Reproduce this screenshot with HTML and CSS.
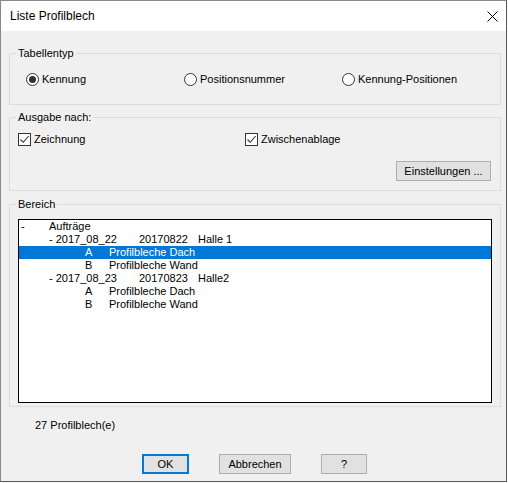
FILE: index.html
```html
<!DOCTYPE html>
<html lang="de">
<head>
<meta charset="utf-8">
<title>Liste Profilblech</title>
<link rel="stylesheet" href="styles.css">
</head>
<body>
<div class="window">
  <div class="titlebar">
    <span class="title">Liste Profilblech</span>
    <svg class="close" width="11" height="11" viewBox="0 0 11 11"><path d="M0.5 0.5 L10.5 10.5 M10.5 0.5 L0.5 10.5" stroke="#000" stroke-width="1" fill="none"/></svg>
  </div>
  <div class="content">
    <div class="group g1">
      <div class="group-title">Tabellentyp</div>
      <div class="radio-row">
        <label class="opt"><span class="radio checked"></span>Kennung</label>
        <label class="opt"><span class="radio"></span>Positionsnummer</label>
        <label class="opt"><span class="radio"></span>Kennung-Positionen</label>
      </div>
    </div>
    <div class="group g2">
      <div class="group-title">Ausgabe nach:</div>
      <div class="check-row">
        <label class="chk-opt"><span class="check"><svg width="11" height="11" viewBox="0 0 11 11"><path d="M1.5 5.5 L4.2 8.3 L9.7 2" stroke="#333" stroke-width="1.1" fill="none"/></svg></span>Zeichnung</label>
        <label class="chk-opt"><span class="check"><svg width="11" height="11" viewBox="0 0 11 11"><path d="M1.5 5.5 L4.2 8.3 L9.7 2" stroke="#333" stroke-width="1.1" fill="none"/></svg></span>Zwischenablage</label>
      </div>
      <div class="btn-row-right">
        <button class="btn btn-settings">Einstellungen ...</button>
      </div>
    </div>
    <div class="group g3">
      <div class="group-title">Bereich</div>
      <div class="list">
        <div class="row"><span class="c1">-</span><span class="c2">Aufträge</span></div>
        <div class="row"><span class="c2 span3">- 2017_08_22</span><span class="c5">20170822</span><span class="c6">Halle 1</span></div>
        <div class="row selected"><span class="c3">A</span><span class="c4 span-rest">Profilbleche Dach</span></div>
        <div class="row"><span class="c3">B</span><span class="c4 span-rest">Profilbleche Wand</span></div>
        <div class="row"><span class="c2 span3">- 2017_08_23</span><span class="c5">20170823</span><span class="c6">Halle2</span></div>
        <div class="row"><span class="c3">A</span><span class="c4 span-rest">Profilbleche Dach</span></div>
        <div class="row"><span class="c3">B</span><span class="c4 span-rest">Profilbleche Wand</span></div>
      </div>
    </div>
    <div class="count">27 Profilblech(e)</div>
    <div class="btn-row">
      <button class="btn btn-ok">OK</button>
      <button class="btn btn-cancel">Abbrechen</button>
      <button class="btn btn-help">?</button>
    </div>
  </div>
</div>
</body>
</html>
```

FILE: styles.css
```css
html, body {
  margin: 0;
  padding: 0;
  background: #f4f4f4;
}
body {
  font-family: "Liberation Sans", Arial, sans-serif;
  font-size: 11px;
  color: #000;
}
.window {
  width: 505px;
  height: 480px;
  border-top: 1px solid #8a8a8a;
  border-left: 1px solid #8a8a8a;
  border-right: 1px solid #5c5c5c;
  border-bottom: 1px solid #5c5c5c;
  background: #f0f0f0;
  display: flex;
  flex-direction: column;
}
.titlebar {
  height: 30px;
  background: #fff;
  display: flex;
  align-items: center;
  justify-content: space-between;
  padding-left: 9px;
  padding-right: 8px;
}
.title {
  font-size: 12px;
  line-height: 30px;
}
.close {
  display: block;
}
.content {
  flex: 1;
  display: flex;
  flex-direction: column;
}
.group {
  border: 1px solid #dcdcdc;
  margin-left: 8px;
  margin-right: 5px;
}
.group-title {
  width: max-content;
  margin: -7px 0 0 6px;
  padding: 0 2px;
  background: #f0f0f0;
  line-height: 13px;
}
.g1 {
  margin-top: 22px;
  padding-bottom: 18px;
}
.radio-row {
  display: flex;
  margin-top: 13px;
  padding-left: 16px;
  height: 13px;
}
.opt {
  width: 158px;
  display: flex;
  align-items: center;
  gap: 3px;
  line-height: 13px;
}
.radio {
  box-sizing: border-box;
  width: 13px;
  height: 13px;
  border: 1px solid #333;
  border-radius: 50%;
  background: #fff;
  display: flex;
  align-items: center;
  justify-content: center;
}
.radio.checked::after {
  content: "";
  width: 7px;
  height: 7px;
  border-radius: 50%;
  background: #333;
}
.g2 {
  margin-top: 12px;
  padding-bottom: 9px;
}
.check-row {
  display: flex;
  margin-top: 9px;
  padding-left: 8px;
  height: 13px;
}
.chk-opt {
  display: flex;
  align-items: center;
  gap: 3px;
  line-height: 13px;
}
.chk-opt:first-child {
  width: 227px;
}
.check {
  box-sizing: border-box;
  width: 13px;
  height: 13px;
  border: 1px solid #333;
  background: #fff;
  display: flex;
}
.check svg {
  display: block;
}
.btn-row-right {
  display: flex;
  justify-content: flex-end;
  margin-top: 15px;
  padding-right: 9px;
}
.btn {
  box-sizing: border-box;
  height: 20px;
  border: 1px solid #adadad;
  background: #e1e1e1;
  font-family: "Liberation Sans", Arial, sans-serif;
  font-size: 11px;
  color: #000;
  padding: 0;
  margin: 0;
  line-height: 18px;
}
.btn-settings {
  width: 95px;
}
.g3 {
  margin-top: 13px;
  padding-bottom: 3px;
}
.list {
  box-sizing: border-box;
  margin: 8px 8px 0 8px;
  height: 184px;
  border: 1px solid #000;
  background: #fff;
}
.row {
  display: grid;
  grid-template-columns: 28px 36px 24px 30px 59px 1fr;
  padding-left: 2px;
  height: 13px;
  line-height: 13px;
  white-space: nowrap;
}
.row.selected {
  background: #0078d7;
  color: #fff;
}
.c1 { grid-column: 1; }
.c2 { grid-column: 2; }
.c3 { grid-column: 3; }
.c4 { grid-column: 4; }
.c5 { grid-column: 5; }
.c6 { grid-column: 6; }
.span3 { grid-column: 2 / 5; }
.span-rest { grid-column: 4 / 7; }
.count {
  margin-top: 12px;
  padding-left: 34px;
  line-height: 13px;
}
.btn-row {
  display: flex;
  gap: 30px;
  margin-top: 22px;
  padding-left: 141px;
}
.btn-ok {
  width: 47px;
  border: 2px solid #0078d7;
  line-height: 16px;
}
.btn-cancel {
  width: 72px;
}
.btn-help {
  width: 46px;
}
```
